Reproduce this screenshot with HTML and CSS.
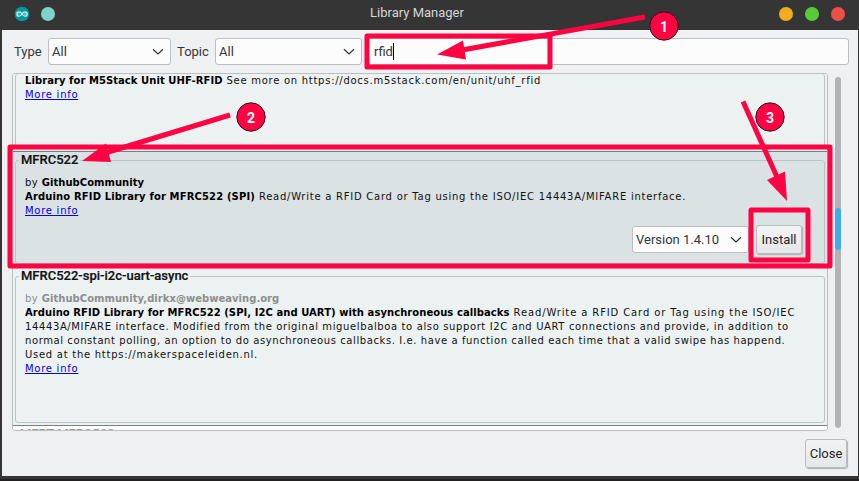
FILE: index.html
```html
<!DOCTYPE html>
<html lang="en">
<head>
<meta charset="utf-8">
<title>Library Manager</title>
<link rel="stylesheet" href="styles.css">
</head>
<body>
<div class="window">
  <header class="titlebar">
    <div class="side">
      <svg class="logo" width="16" height="16" viewBox="0 0 16 16"><circle cx="8" cy="8" r="7.3" fill="#00979d"/><path d="M8 8C7 6.500 6.200 5.800 5.100 5.800a2.200 2.200 0 0 0 0 4.400C6.200 10.200 7 9.500 8 8s1.800-2.200 2.900-2.200a2.200 2.200 0 0 1 0 4.400C9.800 10.200 9 9.500 8 8Z" fill="none" stroke="#d8f0f0" stroke-width="1.300"/><path d="M4.300 8h1.600M10.200 8h1.600M11 7.200v1.600" stroke="#d8f0f0" stroke-width=".6"/></svg>
      <span class="dot teal"></span>
    </div>
    <h1>Library Manager</h1>
    <div class="side right"><span class="dot amber"></span><span class="dot green"></span><span class="dot red"></span></div>
  </header>
  <main class="content">
    <div class="filters">
      <label class="l-type">Type</label>
      <div class="select s-type"><span>All</span><svg width="12" height="8" viewBox="0 0 12 8"><path d="M1 1.200 6 6l5-4.800"/></svg></div>
      <label class="l-topic">Topic</label>
      <div class="select s-topic"><span>All</span><svg width="12" height="8" viewBox="0 0 12 8"><path d="M1 1.200 6 6l5-4.800"/></svg></div>
      <div class="search">rfid<i class="caret"></i></div>
    </div>
    <div class="listrow">
      <div class="list">
        <section class="item first"><div class="frame"><div class="text">
          <p><b>Library for M5Stack Unit UHF-RFID</b> See more on https://docs.m5stack.com/en/unit/uhf_rfid</p>
          <p><a>More info</a></p>
        </div></div></section>
        <section class="item selected"><div class="frame"><h2>MFRC522</h2><div class="text">
          <p class="author">by <b>GithubCommunity</b></p>
          <p class="wide"><b class="spaced">Arduino RFID Library for MFRC522 (SPI)</b> Read/Write a RFID Card or Tag using the ISO/IEC 14443A/MIFARE interface.</p>
          <p><a>More info</a></p>
        </div>
        <div class="actions"><div class="select version"><span>Version 1.4.10</span><svg width="12" height="8" viewBox="0 0 12 8"><path d="M1 1.200 6 6l5-4.800"/></svg></div><button class="install">Install</button></div>
        </div></section>
        <section class="item third"><div class="frame"><h2>MFRC522-spi-i2c-uart-async</h2><div class="text">
          <p class="author muted">by <b>GithubCommunity,dirkx@webweaving.org</b></p>
          <p class="wider"><b>Arduino RFID Library for MFRC522 (SPI, I2C and UART) with asynchroneous callbacks</b> Read/Write a RFID Card or Tag using the ISO/IEC</p>
          <p class="prose">14443A/MIFARE interface. Modified from the original miguelbalboa to also support I2C and UART connections and provide, in addition to</p>
          <p class="prose tight">normal constant polling, an option to do asynchroneous callbacks. I.e. have a function called each time that a valid swipe has happend.</p>
          <p>Used at the https://makerspaceleiden.nl.</p>
          <p><a>More info</a></p>
        </div></div></section>
        <section class="item last"><h2>MFRT MFRC522</h2></section>
      </div>
      <div class="scrollbar"><div class="thumb"></div></div>
    </div>
    <footer><button class="close">Close</button></footer>
  </main>
</div>
<svg class="annotations" width="859" height="481" viewBox="0 0 859 481">
  <g class="boxes">
    <rect x="367" y="36" width="183" height="31"/>
    <rect x="10" y="147" width="820" height="119"/>
    <rect x="751" y="210" width="57" height="50"/>
  </g>
  <g class="arrows">
    <path d="M645 17 462 50M230 115 105 153M743 101.500 777 177"/>
  </g>
  <g class="heads">
    <path d="M437 54.500 463 40.500 466 59.500ZM82 161 106 143.500 111 162ZM787 201 767 180 785 171.500Z"/>
  </g>
  <g class="badges">
    <circle cx="664" cy="26" r="14.200"/><text x="664" y="31.500">1</text>
    <circle cx="251" cy="117" r="14.200"/><text x="251" y="122.500">2</text>
    <circle cx="770" cy="117" r="14.200"/><text x="770" y="122.500">3</text>
  </g>
</svg>
</body>
</html>
```
FILE: styles.css
```css
* { box-sizing: border-box; }
body { margin: 0; width: 859px; height: 481px; overflow: hidden; background: #2c2c2c; font: 13px Roboto, sans-serif; color: #31363b; }
.window { display: flex; flex-direction: column; width: 859px; height: 481px; background: #353535; padding: 0 1px 3px 2px; border-bottom: 2px solid #232021; }
.titlebar { height: 30px; flex: none; display: flex; justify-content: space-between; align-items: center; padding: 0 13px 2px 12px; background: #353535; }
h1 { margin: 0 50px 3px 0; font-size: 13px; font-weight: 400; color: #d6d6d6; }
.side { width: 110px; display: flex; align-items: center; gap: 11px; }
.side.right { width: 85px; justify-content: flex-end; gap: 12px; }
.dot { width: 14px; height: 14px; border-radius: 50%; }
.teal { background: #7dd2ca; }
.amber { background: #f0ad1d; }
.green { background: #58ca38; }
.red { background: #e8524a; }
.content { flex: 1; background: #eff0f2; padding: 8px 9px 0 10px; }
.filters { display: flex; align-items: center; height: 27px; }
.l-type { width: 36px; padding-left: 2px; }
.l-topic { width: 44px; padding-left: 6px; }
.select { display: flex; align-items: center; justify-content: space-between; height: 27px; padding: 0 6px 0 3px; background: #fcfcfc; border: 1px solid #bcbfc1; border-radius: 3px; }
.select svg { fill: none; stroke: #31363b; stroke-width: 1.200; }
.s-type { width: 123px; }
.s-topic { width: 147px; }
.search { flex: 1; margin-left: 5px; height: 27px; display: flex; align-items: center; padding-left: 6px; background: #fcfcfc; border: 1px solid #bcbfc1; border-radius: 3px; }
.caret { width: 1px; height: 17px; background: #000; }
.listrow { display: flex; margin-top: 8px; height: 358px; }
.list { width: 816px; border: 1px solid #bcbfc1; border-radius: 3px; background: #fff; overflow: hidden; }
.item { background: #ecf1f1; padding: 8px 2px 2px; border-top: 1px solid #7a8080; overflow: hidden; }
.frame { border: 1px solid #bcc3c3; border-radius: 3px; height: 100%; display: flex; flex-direction: column; }
.first { border-top: 0; height: 77px; padding-top: 0; }
.first .frame { border-top: 0; border-bottom: 0; }
.selected { height: 116px; background: #dae2e3; }
.selected .frame { height: 104px; }
.third { height: 158px; }
.third .frame { height: 147px; }
.last { background: #fff; padding: 0 5px; height: 40px; }
.last h2 { color: #999; -webkit-text-stroke: 0; margin: -1px 0 0; }
h2 { align-self: flex-start; height: 18px; margin: -10px 0 0 3px; padding: 0 2px; background: inherit; font-size: 13px; line-height: 18px; font-weight: 500; color: #111; -webkit-text-stroke: .2px #111; }
.selected h2 { background: #dae2e3; }
.third h2 { background: #ecf1f1; }
.text { padding: 7px 0 0 9px; font: 10px/14px "DejaVu Sans", sans-serif; color: #111; letter-spacing: .73px; }
.first .text { padding-top: 0; }
p { margin: 0; height: 14px; white-space: nowrap; }
b { color: #000; letter-spacing: .06px; }
b.spaced { letter-spacing: .14px; }
.author { letter-spacing: .45px; }
.author b { letter-spacing: .03px; }
.wide { letter-spacing: .75px; }
.wider { letter-spacing: .88px; }
.prose { letter-spacing: .62px; }
.tight { letter-spacing: .59px; }
.muted, .muted b { color: #8c8f8f; }
a { color: #00e; text-decoration: underline; }
.actions { display: flex; justify-content: flex-end; align-items: center; gap: 7px; margin-top: 7px; padding-right: 22px; }
.version { width: 117px; }
button { font: 13px Roboto, sans-serif; color: #232629; background: linear-gradient(#f2f3f4, #e6e7e8); border: 1px solid #babcbe; border-radius: 3px; padding: 0; box-shadow: 1px 1px 1px #aeb1b3; }
.install { width: 46px; height: 29px; }
.close { width: 42px; height: 29px; }
.scrollbar { margin: 4px 0 3px 7px; width: 6px; border-radius: 3px; background: #b1b3b4; padding-top: 131px; }
.thumb { height: 42px; border-radius: 3px; background: #3daee9; }
footer { display: flex; justify-content: flex-end; margin-top: 8px; padding-right: 2px; }
.annotations { position: absolute; left: 0; top: 0; }
.boxes { fill: none; stroke: #ff0343; stroke-width: 5; stroke-linejoin: round; }
.arrows { fill: none; stroke: #ff0343; stroke-width: 5; }
.heads { fill: #ff0343; }
.badges circle { fill: #ff0343; stroke: #301018; stroke-width: 1; }
.badges text { fill: #fff; font: 700 14px Roboto, sans-serif; text-anchor: middle; }
```
